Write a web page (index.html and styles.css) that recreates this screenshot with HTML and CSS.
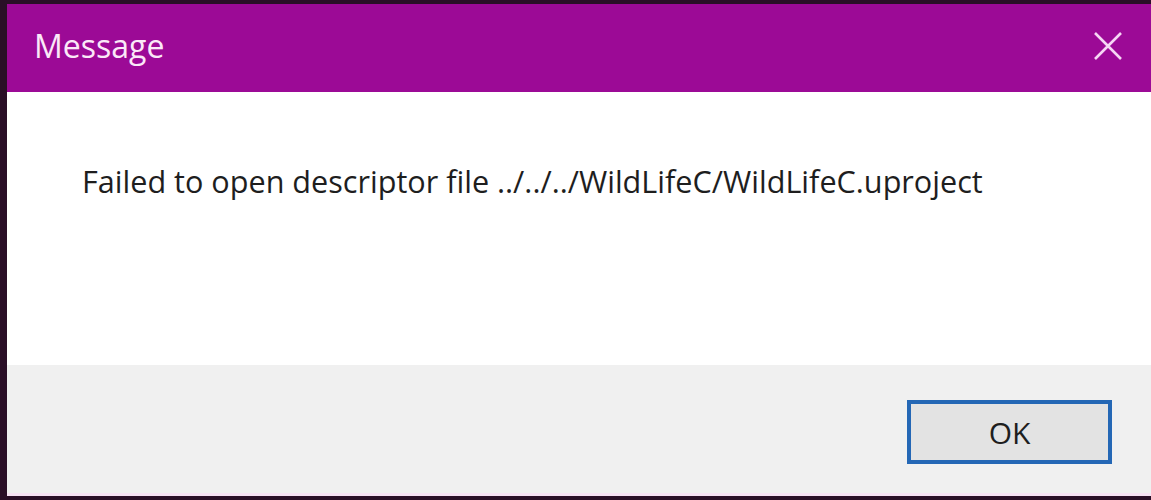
FILE: index.html
```html
<!DOCTYPE html>
<html>
<head>
<meta charset="utf-8">
<link rel="stylesheet" href="styles.css">
</head>
<body>
<div class="window">
  <div class="titlebar">
    <span class="title">Message</span>
    <span class="close" aria-label="Close">
      <svg width="30" height="30" viewBox="0 0 30 30"><path d="M2 2 L28 28 M28 2 L2 28" stroke="#f6d6f4" stroke-width="2.6" fill="none"/></svg>
    </span>
  </div>
  <div class="content">
    <p class="msg">Failed to open descriptor file ../../../WildLifeC/WildLifeC.uproject</p>
  </div>
  <div class="footer">
    <button class="ok">OK</button>
  </div>
</div>
</body>
</html>
```

FILE: styles.css
```css
html, body {
  margin: 0;
  padding: 0;
  width: 1151px;
  height: 500px;
  overflow: hidden;
  background: #2a0f27;
}
.window {
  margin: 4px 0 0 7px;
  height: 489px;
  display: flex;
  flex-direction: column;
  font-family: "Open Sans", "Noto Sans", sans-serif;
  border-bottom: 3px solid #f7e3f4;
}
.titlebar {
  height: 88px;
  background: #9c0a96;
  display: flex;
  align-items: center;
  justify-content: space-between;
  padding: 0 28px 0 27px;
  box-sizing: border-box;
}
.title {
  color: #fbe8f8;
  font-size: 32px;
  margin-top: -5px;
}
.close {
  display: flex;
  margin-top: -4px;
}
.content {
  background: #ffffff;
  height: 273px;
  padding: 0 0 0 75px;
  box-sizing: border-box;
}
.msg {
  margin: 0;
  padding-top: 68px;
  font-size: 30.6px;
  color: #1e1e1e;
  white-space: nowrap;
}
.footer {
  flex: 1;
  background: #f0f0f0;
  display: flex;
  justify-content: flex-end;
  align-items: flex-start;
  padding: 35px 39px 0 0;
}
.ok {
  width: 205px;
  height: 64px;
  box-sizing: border-box;
  border: 4px solid #2467b5;
  background: #e3e3e3;
  font-family: "Open Sans", "Noto Sans", sans-serif;
  font-size: 30px;
  color: #1e1e1e;
  padding: 0;
}
```
